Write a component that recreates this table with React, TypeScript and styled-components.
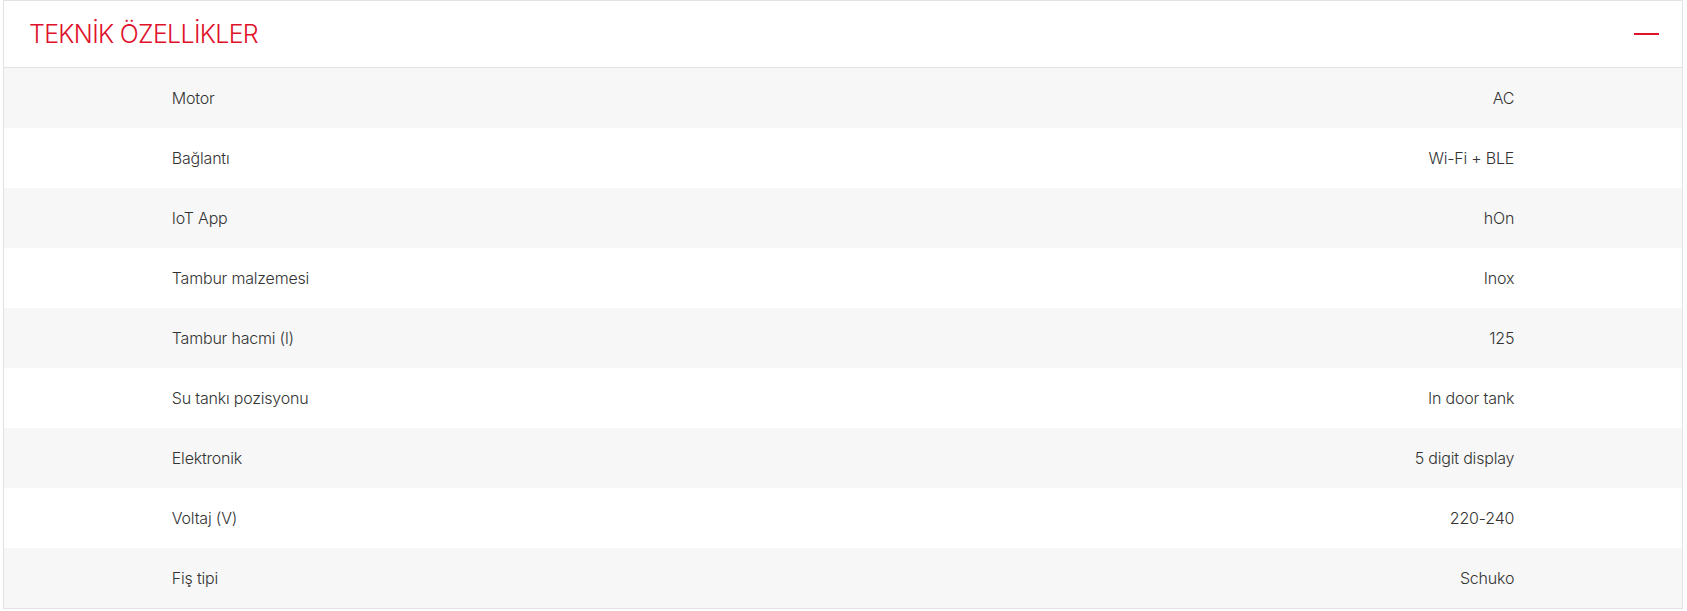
import React from "react";
import styled, { createGlobalStyle } from "styled-components";

const GlobalStyle = createGlobalStyle`
  html, body { margin: 0; padding: 0; background: #ffffff; }
  body { font-family: Inter, "Noto Sans", Arial, sans-serif; }
`;

const Page = styled.div`
  padding: 0 4px 0 3px;
`;

const Panel = styled.section`
  border: 1px solid #e2e2e2;
  background: #ffffff;
`;

const Header = styled.div`
  height: 66px;
  display: flex;
  align-items: center;
  justify-content: space-between;
  padding: 0 23px 0 25px;
  border-bottom: 1px solid #e2e2e2;
`;

const Title = styled.h2`
  margin: 0;
  font-family: Inter, "Noto Sans", sans-serif;
  font-weight: 300;
  font-size: 25px;
  letter-spacing: -0.7px;
  color: #e0112b;
`;

const Minus = styled.span`
  display: block;
  width: 25px;
  height: 2px;
  background: #e0112b;
`;

const Row = styled.div<{ $alt: boolean }>`
  height: 60px;
  display: flex;
  align-items: center;
  justify-content: space-between;
  padding: 0 10%;
  background: ${(p) => (p.$alt ? "#f7f7f7" : "#ffffff")};
  font-size: 16px;
  font-weight: 300;
  letter-spacing: -0.2px;
  color: #333333;
`;

const Label = styled.span``;
const Value = styled.span`
  text-align: right;
`;

const specs: [string, string][] = [
  ["Motor", "AC"],
  ["Bağlantı", "Wi-Fi + BLE"],
  ["IoT App", "hOn"],
  ["Tambur malzemesi", "Inox"],
  ["Tambur hacmi (l)", "125"],
  ["Su tankı pozisyonu", "In door tank"],
  ["Elektronik", "5 digit display"],
  ["Voltaj (V)", "220-240"],
  ["Fiş tipi", "Schuko"],
];

export default function App() {
  return (
    <Page>
      <GlobalStyle />
      <Panel>
        <Header>
          <Title>TEKNİK ÖZELLİKLER</Title>
          <Minus />
        </Header>
        {specs.map(([k, v], i) => (
          <Row key={k} $alt={i % 2 === 0}>
            <Label>{k}</Label>
            <Value>{v}</Value>
          </Row>
        ))}
      </Panel>
    </Page>
  );
}
